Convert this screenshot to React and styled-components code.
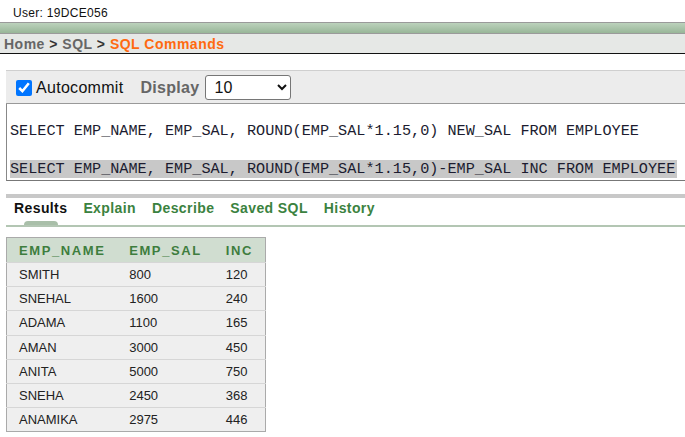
import React from "react";
import styled, { createGlobalStyle } from "styled-components";

const Global = createGlobalStyle`
  html, body { margin: 0; padding: 0; background: #fff; }
  body { font-family: "Liberation Sans", Arial, sans-serif; color: #111; }
`;

const UserLine = styled.div`
  height: 22px;
  box-sizing: border-box;
  padding: 6px 0 0 13px;
  font-size: 12px;
  line-height: 14px;
  letter-spacing: 0.3px;
  color: #111;
`;

const GreenBar = styled.div`
  height: 10px;
  border-top: 1px solid #9a9a9a;
  border-bottom: 1px solid #9a9a9a;
  background: linear-gradient(#bcd2bc, #98b698);
`;

const Crumbs = styled.div`
  height: 19px;
  background: #e6e8e6;
  border-bottom: 1px solid #111;
  padding-left: 4px;
  font-size: 14px;
  font-weight: bold;
  line-height: 20px;
  letter-spacing: 0.5px;
  color: #666;
`;

const Sep = styled.span`
  color: #333;
`;

const Current = styled.span`
  color: #ff6a10;
`;

const Main = styled.div`
  padding-left: 6px;
  margin-top: 16px;
`;

const Toolbar = styled.div`
  display: flex;
  align-items: center;
  box-sizing: border-box;
  height: 34px;
  padding: 1px 0 0 10px;
  background: #ececec;
  border-top: 1px solid #cfcfcf;
  border-bottom: 1px solid #999;
`;

const Check = styled.input`
  width: 16px;
  height: 16px;
  margin: 0 4px 0 0;
  accent-color: #0075ff;
`;

const Label = styled.span`
  font-size: 16px;
  letter-spacing: 0.3px;
  color: #111;
  margin-right: 17px;
`;

const DisplayLabel = styled.span`
  font-size: 16px;
  font-weight: bold;
  letter-spacing: 0.3px;
  color: #666;
  margin-right: 6px;
`;

const Select = styled.select`
  width: 86px;
  height: 25px;
  font-family: "Liberation Sans", Arial, sans-serif;
  font-size: 16px;
  color: #111;
  background: #fff;
  border: 1px solid #767676;
  border-radius: 3px;
  padding-left: 4px;
`;

const Editor = styled.div`
  border-left: 1px solid #888;
  border-bottom: 1px solid #777;
  padding: 18px 0 1px 3px;
  font-family: "Liberation Mono", "DejaVu Sans Mono", monospace;
  font-size: 15.2px;
  line-height: 19px;
  color: #1c1c30;
  white-space: pre;
  overflow: hidden;
`;

const Line = styled.div`
  height: 19px;
`;

const Marked = styled.span`
  background: #c8c8c8;
  padding-right: 2px;
`;

const Divider = styled.div`
  margin-top: 13px;
  height: 4px;
  background: #c8c8c8;
`;

const Tabs = styled.div`
  display: flex;
  gap: 16px;
  padding-left: 8px;
  height: 27px;
  border-bottom: 2px solid #b3c6b3;
  align-items: flex-start;
`;

const Tab = styled.div`
  display: flex;
  flex-direction: column;
  padding-top: 2px;
  font-size: 14px;
  font-weight: bold;
  line-height: 16px;
  letter-spacing: 0.4px;
  color: ${(p) => (p.$active ? "#111" : "#3b8240")};
`;

const Indicator = styled.div`
  margin: 5px 0 0 10px;
  width: 34px;
  height: 4px;
  background: #a9bfa9;
  border-radius: 4px 4px 0 0;
`;

const Table = styled.table`
  margin-top: 10px;
  border-collapse: collapse;
  border: 1px solid #aaa;
  width: 260px;
  font-size: 13px;
`;

const Th = styled.th`
  height: 25px;
  padding: 0 0 0 12px;
  text-align: left;
  background: #d0ddd0;
  color: #3e7d3e;
  font-weight: bold;
  letter-spacing: 1.6px;
  width: ${(p) => p.$w}px;
  box-sizing: border-box;
`;

const Td = styled.td`
  height: 23.2px;
  padding: 0 0 0 12px;
  background: #efefef;
  border-top: 1px solid #d6d6d6;
  color: #222;
`;

const rows = [
  ["SMITH", "800", "120"],
  ["SNEHAL", "1600", "240"],
  ["ADAMA", "1100", "165"],
  ["AMAN", "3000", "450"],
  ["ANITA", "5000", "750"],
  ["SNEHA", "2450", "368"],
  ["ANAMIKA", "2975", "446"],
];

export default function App() {
  return (
    <>
      <Global />
      <UserLine>User: 19DCE056</UserLine>
      <GreenBar />
      <Crumbs>
        Home <Sep>&gt;</Sep> SQL <Sep>&gt;</Sep> <Current>SQL Commands</Current>
      </Crumbs>
      <Main>
        <Toolbar>
          <Check type="checkbox" defaultChecked />
          <Label>Autocommit</Label>
          <DisplayLabel>Display</DisplayLabel>
          <Select defaultValue="10">
            <option value="10">10</option>
            <option value="25">25</option>
            <option value="50">50</option>
          </Select>
        </Toolbar>
        <Editor>
          <Line>SELECT EMP_NAME, EMP_SAL, ROUND(EMP_SAL*1.15,0) NEW_SAL FROM EMPLOYEE</Line>
          <Line />
          <Line>
            <Marked>SELECT EMP_NAME, EMP_SAL, ROUND(EMP_SAL*1.15,0)-EMP_SAL INC FROM EMPLOYEE</Marked>
          </Line>
        </Editor>
        <Divider />
        <Tabs>
          <Tab $active>
            Results
            <Indicator />
          </Tab>
          <Tab>Explain</Tab>
          <Tab>Describe</Tab>
          <Tab>Saved SQL</Tab>
          <Tab>History</Tab>
        </Tabs>
        <Table>
          <thead>
            <tr>
              <Th $w={111}>EMP_NAME</Th>
              <Th $w={97}>EMP_SAL</Th>
              <Th $w={52}>INC</Th>
            </tr>
          </thead>
          <tbody>
            {rows.map((r) => (
              <tr key={r[0]}>
                <Td>{r[0]}</Td>
                <Td>{r[1]}</Td>
                <Td>{r[2]}</Td>
              </tr>
            ))}
          </tbody>
        </Table>
      </Main>
    </>
  );
}
